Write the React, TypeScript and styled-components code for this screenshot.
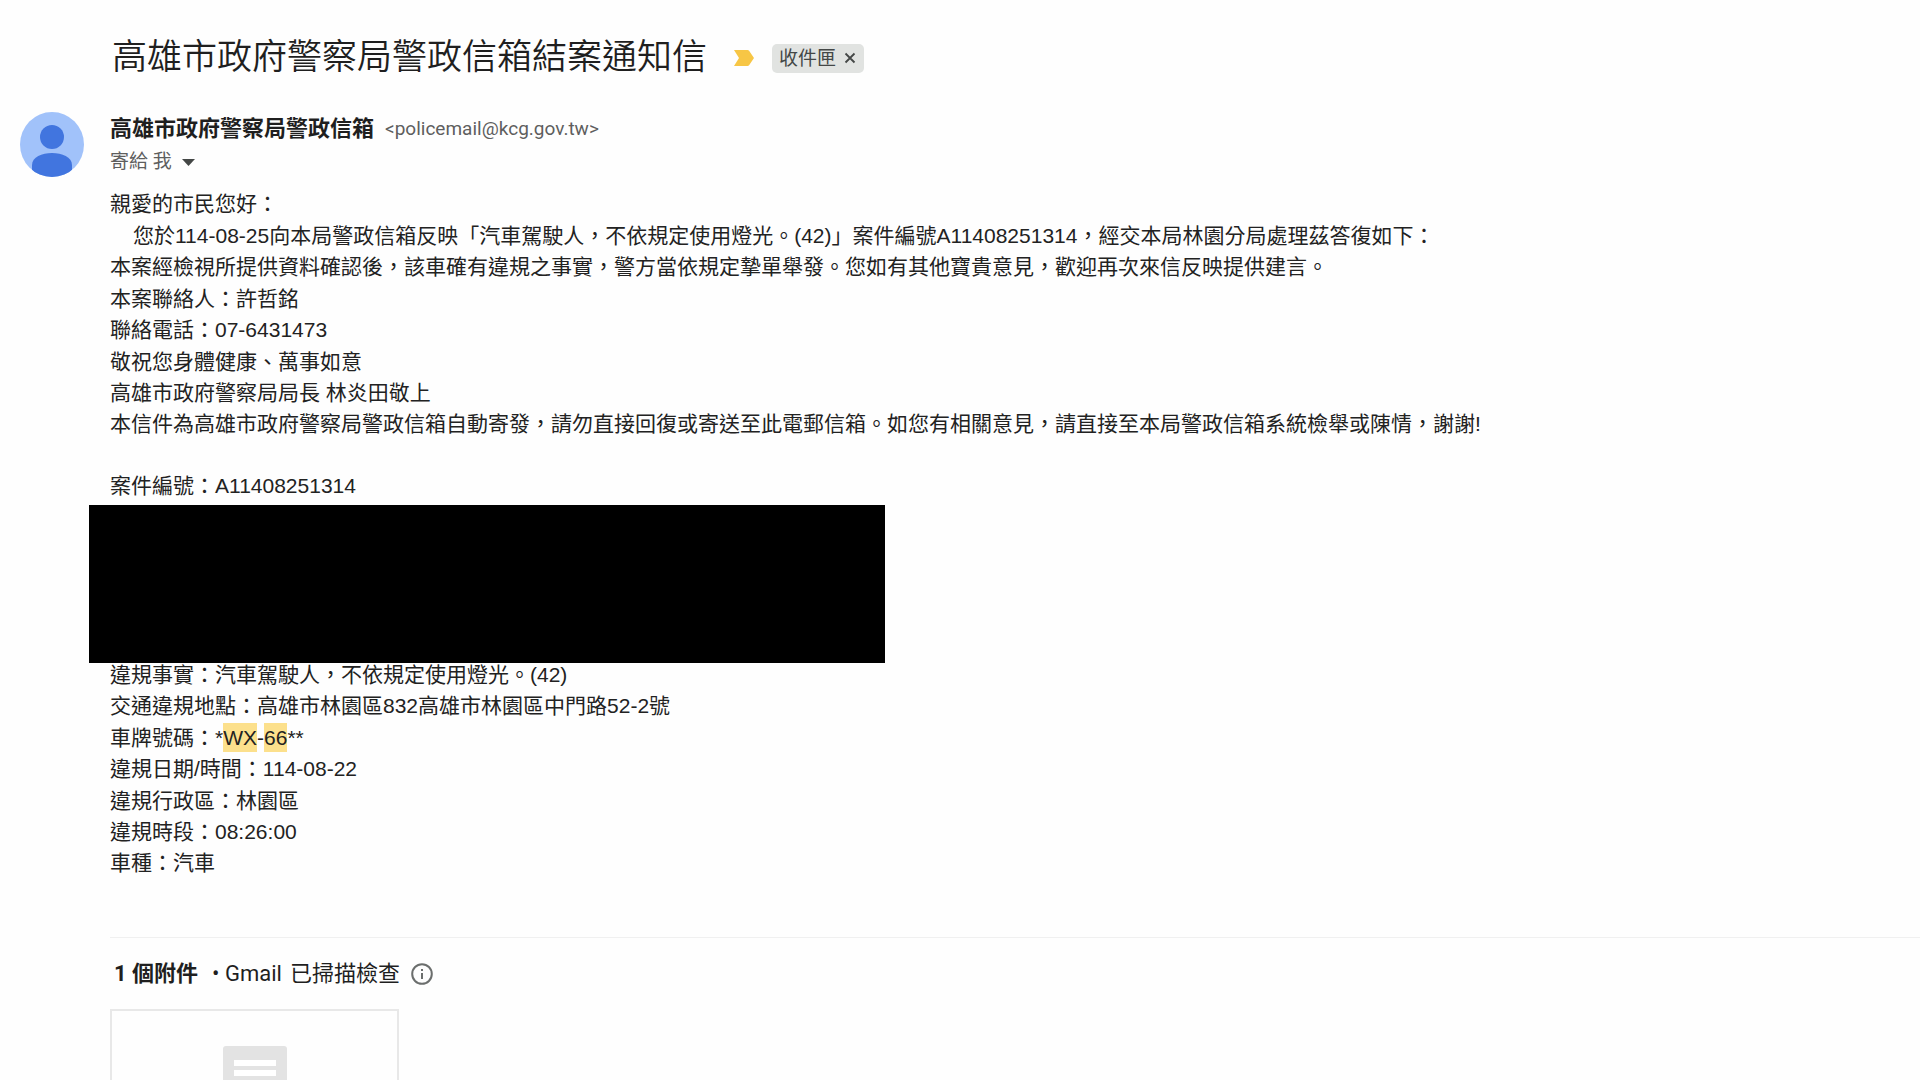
import React from "react";
import styled, { createGlobalStyle } from "styled-components";

const uiFont = `Roboto, "Noto Sans CJK TC", sans-serif`;
const bodyFont = `"Liberation Sans", "Noto Sans CJK TC", sans-serif`;

const GlobalStyle = createGlobalStyle`
  *, *::before, *::after { box-sizing: border-box; }
  body {
    margin: 0;
    background: #fefefe;
    color: #222;
    font-family: ${uiFont};
  }
  h1, h2, p { margin: 0; }
  button {
    border: 0;
    padding: 0;
    background: none;
    color: inherit;
    font: inherit;
    cursor: pointer;
  }
  svg { display: block; }
`;

const Page = styled.main`
  height: 100vh;
  overflow: hidden;
  padding-top: 32px;
`;

const SubjectBar = styled.header`
  display: flex;
  align-items: center;
  height: 52px;
  padding-left: 112px;
`;

const Subject = styled.h1`
  font-size: 35px;
  line-height: 52px;
  font-weight: 350;
  color: #1f1f1f;
`;

const MarkerButton = styled.button`
  margin: 0 18px 0 27px;
`;

const LabelChip = styled.span`
  display: flex;
  align-items: center;
  gap: 8px;
  height: 29px;
  padding: 0 8px 0 7px;
  border-radius: 5px;
  background: #e1e3e1;
  color: #444746;
  font-size: 19px;
  line-height: 29px;
`;

const Message = styled.article`
  display: grid;
  grid-template-columns: 90px minmax(0, 1fr);
  padding-left: 20px;
  margin-top: 28px;
`;

const Content = styled.div`
  min-width: 0;
`;

const SenderRow = styled.div`
  display: flex;
  align-items: center;
  gap: 11px;
  height: 34px;
  white-space: nowrap;
`;

const SenderName = styled.h2`
  font-size: 22px;
  line-height: 34px;
  font-weight: 700;
  color: #1f1f1f;
`;

const SenderAddress = styled.span`
  font-size: 19px;
  line-height: 34px;
  color: #5e5e5e;
`;

const RecipientButton = styled.button`
  display: flex;
  align-items: center;
  gap: 10px;
  font-size: 19px;
  line-height: 32px;
  color: #5e5e5e;
`;

const Body = styled.div`
  padding-top: 10px;
  font-family: ${bodyFont};
  font-size: 21px;
  line-height: 31px;
`;

const Block = styled.div`
  display: flex;
  flex-direction: column;
  gap: 1px;
`;

const Line = styled.p<{ $indent?: boolean }>`
  padding-left: ${(p) => (p.$indent ? "23px" : "0")};
`;

const CaseNumber = styled(Line)`
  margin-top: 31px;
`;

const Redaction = styled.div`
  width: 796px;
  max-width: 100%;
  height: 158px;
  margin: 4px 0 -4px -21px;
  background: #000;
`;

const Highlight = styled.mark`
  padding: 3px 0;
  background: #fce08c;
  color: inherit;
`;

const Attachments = styled.section`
  margin-top: 59px;
  border-top: 1px solid #f0f0f0;
`;

const AttachmentTitle = styled.div`
  display: flex;
  align-items: center;
  height: 71px;
  padding-left: 4px;
  font-size: 22px;
  line-height: 32px;
  color: #1f1f1f;
`;

const Count = styled.strong`
  font-weight: 700;
  margin-right: 14px;
`;

const ScanNote = styled.span`
  display: flex;
  gap: 8px;
`;

const InfoButton = styled.button`
  margin-left: 11px;
`;

const AttachmentCard = styled.a`
  display: flex;
  justify-content: center;
  width: 289px;
  height: 198px;
  padding-top: 35px;
  border: 2px solid #e8e8e8;
`;

const Avatar = () => (
  <svg width="64" height="65" viewBox="0 0 64 65" role="img" aria-label="寄件者">
    <defs>
      <clipPath id="avatarClip">
        <ellipse cx="32" cy="32.5" rx="32" ry="32.5" />
      </clipPath>
    </defs>
    <g clipPath="url(#avatarClip)">
      <rect width="64" height="65" fill="#a1c2fa" />
      <circle cx="32" cy="25" r="12" fill="#4175df" />
      <path d="M12 53c0-8 10-12 20-12s20 4 20 12v12H12z" fill="#4175df" />
    </g>
  </svg>
);

const App = () => (
  <>
    <GlobalStyle />
    <Page>
      <SubjectBar>
        <Subject>高雄市政府警察局警政信箱結案通知信</Subject>
        <MarkerButton aria-label="重要郵件">
          <svg width="20" height="16" viewBox="0 0 20 16">
            <path d="M0 0h13.500q1 0 1.600.8L20 8l-4.900 7.200q-.6.8-1.600.8H0l5-8z" fill="#f7c645" />
          </svg>
        </MarkerButton>
        <LabelChip>
          收件匣
          <button aria-label="移除標籤">
            <svg width="12" height="12" viewBox="0 0 12 12">
              <path d="M1.500 1.500l9 9M10.500 1.500l-9 9" stroke="#444746" strokeWidth="1.800" />
            </svg>
          </button>
        </LabelChip>
      </SubjectBar>

      <Message>
        <Avatar />
        <Content>
          <SenderRow>
            <SenderName>高雄市政府警察局警政信箱</SenderName>
            <SenderAddress>&lt;policemail@kcg.gov.tw&gt;</SenderAddress>
          </SenderRow>
          <RecipientButton>
            寄給 我
            <svg width="13" height="7" viewBox="0 0 13 7">
              <path d="M0 0h13L6.500 7z" fill="#444746" />
            </svg>
          </RecipientButton>

          <Body>
            <Block>
              <Line>親愛的市民您好：</Line>
              <div>
                <Line $indent>
                  您於114-08-25向本局警政信箱反映「汽車駕駛人，不依規定使用燈光。(42)」案件編號A11408251314，經交本局林園分局處理茲答復如下：
                </Line>
                <Line>
                  本案經檢視所提供資料確認後，該車確有違規之事實，警方當依規定摯單舉發。您如有其他寶貴意見，歡迎再次來信反映提供建言。
                </Line>
              </div>
              <div>
                <Line>本案聯絡人：許哲銘</Line>
                <Line>聯絡電話：07-6431473</Line>
              </div>
              <div>
                <Line>敬祝您身體健康、萬事如意</Line>
                <Line>高雄市政府警察局局長 林炎田敬上</Line>
                <Line>
                  本信件為高雄市政府警察局警政信箱自動寄發，請勿直接回復或寄送至此電郵信箱。如您有相關意見，請直接至本局警政信箱系統檢舉或陳情，謝謝!
                </Line>
              </div>
            </Block>
            <CaseNumber>案件編號：A11408251314</CaseNumber>
            <Redaction />
            <Block>
              <div>
                <Line>違規事實：汽車駕駛人，不依規定使用燈光。(42)</Line>
                <Line>交通違規地點：高雄市林園區832高雄市林園區中門路52-2號</Line>
              </div>
              <div>
                <Line>
                  車牌號碼：*<Highlight>WX</Highlight>-<Highlight>66</Highlight>**
                </Line>
                <Line>違規日期/時間：114-08-22</Line>
              </div>
              <div>
                <Line>違規行政區：林園區</Line>
                <Line>違規時段：08:26:00</Line>
                <Line>車種：汽車</Line>
              </div>
            </Block>
          </Body>

          <Attachments>
            <AttachmentTitle>
              <Count>1 個附件</Count>
              <ScanNote>
                <span>• Gmail</span>
                <span>已掃描檢查</span>
              </ScanNote>
              <InfoButton aria-label="附件掃描資訊">
                <svg width="22" height="22" viewBox="0 0 22 22">
                  <circle cx="11" cy="11" r="9.800" fill="none" stroke="#6b6e6d" strokeWidth="2" />
                  <path d="M10 10h2v6h-2zM10 6h2v2h-2z" fill="#6b6e6d" />
                </svg>
              </InfoButton>
            </AttachmentTitle>
            <AttachmentCard href="#attachment" aria-label="附件">
              <svg width="64" height="64" viewBox="0 0 64 64">
                <rect width="64" height="64" rx="3" fill="#e3e3e3" />
                <path d="M11 14h42v6H11zM11 24h42v6H11zM11 34h42v6H11zM11 44h28v6H11z" fill="#fff" />
              </svg>
            </AttachmentCard>
          </Attachments>
        </Content>
      </Message>
    </Page>
  </>
);

export default App;
